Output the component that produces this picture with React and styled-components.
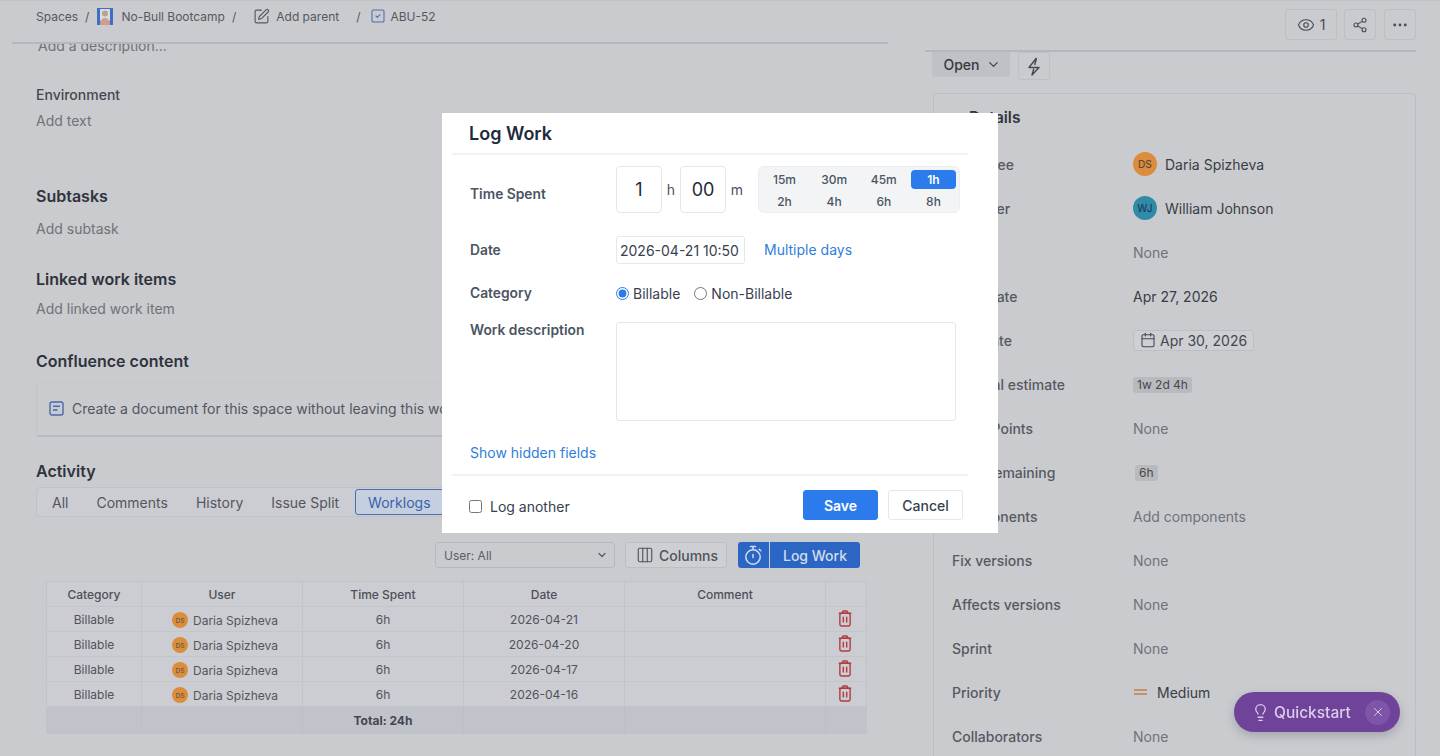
import React from 'react';
import styled, { createGlobalStyle } from 'styled-components';
import {
  Calendar,
  ChevronDown,
  Columns3,
  Eye,
  Lightbulb,
  MoreHorizontal,
  Share2,
  SquareCheck,
  SquarePen,
  X,
} from 'lucide-react';

const GlobalStyle = createGlobalStyle`
  * {
    box-sizing: border-box;
  }

  html,
  body {
    margin: 0;
    height: 100%;
    overflow: hidden;
    background: #c9cbcf;
    font-family: Inter, 'Liberation Sans', sans-serif;
  }
`;

const Page = styled.div`
  display: grid;
  grid-template-columns: 876px 491px;
  column-gap: 37px;
  height: 756px;
  padding-left: 12px;
  overflow: hidden;
  border-top: 1px solid #c0c2c6;
  background: #c9cbcf;
`;

/* ---------- left column ---------- */

const LeftColumn = styled.div`
  display: flex;
  flex-direction: column;
  min-height: 0;
`;

const Breadcrumbs = styled.nav`
  display: flex;
  align-items: center;
  flex: 0 0 43px;
  padding: 0 0 11px 24px;
  border-bottom: 2px solid #b5b7bc;
  font-size: 12px;
  color: #55585f;
`;

const Crumb = styled.span`
  display: inline-flex;
  align-items: center;
  gap: ${(p) => p.$gap || 0}px;
  margin-left: ${(p) => p.$left || 0}px;
`;

const Scroller = styled.div`
  flex: 1;
  min-height: 0;
  overflow: hidden;
  padding-left: 24px;
`;

const Placeholder = styled.div`
  margin-top: ${(p) => p.$top || 0}px;
  margin-left: ${(p) => p.$left || 0}px;
  font-size: 14px;
  line-height: 20px;
  color: #6f7278;
`;

const FieldLabel = styled.div`
  margin-top: ${(p) => p.$top}px;
  font-size: 14px;
  font-weight: 500;
  line-height: 20px;
  color: #44474f;
`;

const SectionTitle = styled.h3`
  margin: ${(p) => p.$top}px 0 0;
  font-size: 16px;
  font-weight: 600;
  line-height: 24px;
  color: #2f333c;
`;

const ConfluenceCard = styled.div`
  display: flex;
  align-items: center;
  gap: 8px;
  width: 830px;
  height: 55px;
  margin-top: 9px;
  padding: 0 12px 2px;
  border: 1px solid #c2c4c8;
  border-top-color: #c6c8cc;
  border-bottom: 2px solid #b8babf;
  border-radius: 4px;
  font-size: 14px;
  color: #53565d;
`;

const Tabs = styled.div`
  display: flex;
  align-items: center;
  gap: 2px;
  width: 830px;
  height: 30px;
  margin-top: 4px;
  padding: 0 2px;
  border: 1px solid #bfc1c6;
  border-radius: 4px;
  background: #cccdd2;
`;

const Tab = styled.div`
  display: flex;
  align-items: center;
  height: 26px;
  margin-left: ${(p) => (p.$active ? '1px' : '0')};
  padding: 0 12px;
  border: 1px solid ${(p) => (p.$active ? '#4a70b4' : 'transparent')};
  border-radius: 3px;
  background: ${(p) => (p.$active ? '#c5cfe0' : 'transparent')};
  font-size: 14px;
  color: ${(p) => (p.$active ? '#3a62a9' : '#53565d')};
`;

const Toolbar = styled.div`
  display: flex;
  justify-content: flex-end;
  gap: 10px;
  width: 824px;
  height: 26px;
  margin-top: 25px;
`;

const UserSelect = styled.div`
  display: flex;
  align-items: center;
  justify-content: space-between;
  width: 180px;
  padding: 0 6px 0 8px;
  border: 1px solid #b7b9be;
  border-radius: 3px;
  font-size: 12px;
  color: #5a5d64;
`;

const ColumnsButton = styled.div`
  display: flex;
  align-items: center;
  gap: 5px;
  width: 102px;
  padding-left: 10px;
  border: 1px solid #bcbec3;
  border-radius: 3px;
  background: #cdcfd3;
  font-size: 14px;
  font-weight: 500;
  color: #50535a;
`;

const LogWorkButton = styled.div`
  display: flex;
  margin-left: 1px;
  width: 122px;
  border-radius: 3px;
  background: #2c66c4;
  color: #d3dcee;
  font-size: 14px;
  font-weight: 500;
`;

const LogWorkIcon = styled.span`
  display: flex;
  align-items: center;
  justify-content: center;
  flex: 0 0 32px;
  border-right: 1px solid #c4d0e8;
`;

const LogWorkText = styled.span`
  flex: 1;
  align-self: center;
  text-align: center;
`;

const WorklogTable = styled.table`
  width: 820px;
  margin: 13px 0 0 10px;
  border: 1px solid #c1c3c7;
  border-collapse: collapse;
  table-layout: fixed;
  font-size: 12px;
  color: #50535a;
  text-align: center;
  background: #cccdd2;

  th {
    height: 25px;
    padding: 0;
    font-weight: 500;
    border-right: 1px solid #c1c3c7;
    border-bottom: 1px solid #c3c5c9;
    color: #4d5058;
  }

  td {
    height: 25px;
    padding: 1px 0 0;
    border-right: 1px solid #c1c3c7;
    border-bottom: 1px solid #c3c5c9;
  }

  th:last-child,
  td:last-child {
    padding-right: 3px;
    border-right: none;
  }
`;

const TotalRow = styled.tr`
  td {
    height: 27px;
    background: #c0c3c9;
    border-right-color: #bcbfc5;
    border-bottom: none;
    font-weight: 700;
    color: #44474f;
  }
`;

const UserCell = styled.span`
  display: inline-flex;
  align-items: center;
  gap: 5px;
  padding-left: 6px;
  color: #53565d;
`;

const Avatar = styled.span`
  display: inline-flex;
  align-items: center;
  justify-content: center;
  flex: none;
  width: ${(p) => p.$size}px;
  height: ${(p) => p.$size}px;
  border-radius: 50%;
  background: ${(p) => p.$color};
  color: ${(p) => p.$ink};
  font-size: ${(p) => p.$size * 0.42}px;
  font-weight: 500;
`;

/* ---------- right column ---------- */

const RightColumn = styled.div`
  display: flex;
  flex-direction: column;
  min-height: 0;
`;

const ActionBar = styled.div`
  display: flex;
  justify-content: flex-end;
  gap: 7px;
  flex: 0 0 51px;
  padding-top: 8px;
  border-bottom: 2px solid #b5b7bc;
`;

const IconButton = styled.div`
  display: flex;
  align-items: center;
  justify-content: center;
  gap: 5px;
  width: ${(p) => p.$width || 32}px;
  height: ${(p) => p.$height || 31}px;
  margin-left: ${(p) => p.$left || 0}px;
  border: 1px solid #bdbfc4;
  border-radius: 3px;
  font-size: 14px;
  color: #4a4d55;
`;

const StatusRow = styled.div`
  display: flex;
  align-items: flex-start;
  gap: 8px;
  height: 28px;
  padding-left: 7px;
`;

const StatusButton = styled.div`
  display: flex;
  align-items: center;
  justify-content: center;
  gap: 6px;
  width: 78px;
  height: 25px;
  padding-left: 2px;
  background: #bfc1c6;
  border-radius: 0 0 3px 3px;
  font-size: 14px;
  font-weight: 500;
  color: #35383f;
`;

const DetailsCard = styled.section`
  flex: 1;
  margin: 13px 0 0 8px;
  padding: 12px 0 0 18px;
  border: 1px solid #bcbec3;
  border-bottom: none;
  border-radius: 4px 4px 0 0;
`;

const DetailsTitle = styled.h3`
  margin: 0 0 12px 17px;
  font-size: 15.5px;
  font-weight: 600;
  line-height: 24px;
  color: #33363e;
`;

const DetailRow = styled.div`
  display: grid;
  grid-template-columns: 181px 1fr;
  align-items: center;
  height: 44px;
  font-size: 14px;
`;

const DetailLabel = styled.span`
  font-weight: 500;
  color: #56595f;
`;

const DetailValue = styled.span`
  display: flex;
  align-items: center;
  gap: ${(p) => p.$gap || 0}px;
  color: ${(p) => (p.$muted ? '#6f7278' : '#3a3d44')};
`;

const DateChip = styled.span`
  display: inline-flex;
  align-items: center;
  gap: 4px;
  height: 21px;
  padding: 0 6px;
  border: 1px solid #bdbfc4;
  border-radius: 3px;
  background: #cdcfd3;
  color: #44474f;
`;

const TimeTag = styled.span`
  display: inline-block;
  margin: 1px 0 0 ${(p) => p.$left || 0}px;
  padding: 0 4px;
  border-radius: 3px;
  background: #b8babe;
  font-size: 12px;
  line-height: 16px;
  color: #44474f;
`;

const PriorityMark = styled.span`
  width: 13px;
  height: 6px;
  margin: 0 10px 0 1px;
  border-top: 2px solid #c2916c;
  border-bottom: 2px solid #c2916c;
`;

const Quickstart = styled.div`
  position: fixed;
  right: 40px;
  bottom: 24px;
  display: flex;
  align-items: center;
  width: 166px;
  height: 40px;
  padding-left: 17px;
  border-radius: 20px;
  background: #6f4399;
  box-shadow: 0 4px 10px rgba(60, 60, 70, 0.25);
  color: #dccdea;
  font-size: 15.5px;
  font-weight: 500;
`;

const QuickstartText = styled.span`
  margin-left: 4px;
`;

const QuickstartClose = styled.span`
  position: absolute;
  right: 10px;
  display: flex;
  align-items: center;
  justify-content: center;
  width: 25px;
  height: 25px;
  border-radius: 50%;
  background: #7e55a9;
`;

/* ---------- modal ---------- */

const ModalLayer = styled.div`
  position: fixed;
  inset: 0;
  display: flex;
  justify-content: center;
  align-items: flex-start;
  padding-top: 113px;
`;

const Modal = styled.div`
  width: 556px;
  height: 420px;
  background: #fff;
`;

const ModalHeader = styled.header`
  display: flex;
  align-items: center;
  height: 42px;
  margin: 0 30px 0 10px;
  padding-left: 17px;
  border-bottom: 2px solid #f1f2f4;
`;

const ModalTitle = styled.h2`
  margin: 0;
  font-size: 18px;
  font-weight: 600;
  color: #1f2a3d;
`;

const FormRow = styled.div`
  display: grid;
  grid-template-columns: 146px 1fr;
  align-items: ${(p) => p.$align || 'center'};
  margin-top: ${(p) => p.$top}px;
  padding-left: 28px;
`;

const FormLabel = styled.label`
  margin-top: ${(p) => p.$shift || 0}px;
  font-size: 13.8px;
  font-weight: 600;
  line-height: 20px;
  color: #4b5563;
`;

const TimeControls = styled.div`
  display: flex;
  align-items: stretch;
  height: 47px;
`;

const TimeInput = styled.input`
  width: 46px;
  padding: 0;
  border: 1px solid #e5e7eb;
  border-radius: 4px;
  outline: none;
  font-family: inherit;
  font-size: 18px;
  text-align: center;
  color: #1f2937;
`;

const TimeUnit = styled.span`
  display: flex;
  align-items: center;
  justify-content: center;
  width: ${(p) => p.$width}px;
  margin-right: ${(p) => p.$right || 0}px;
  font-size: 14px;
  color: #4b5563;
`;

const QuickPicker = styled.div`
  display: grid;
  grid-template-columns: repeat(4, 45px);
  grid-auto-rows: 19px;
  gap: 3px 4.67px;
  width: 202px;
  padding: 3px;
  border: 1px solid #eceef1;
  border-radius: 6px;
  background: #f3f4f6;
`;

const QuickOption = styled.span`
  display: flex;
  align-items: center;
  justify-content: center;
  border-radius: 4px;
  background: ${(p) => (p.$active ? '#2b7bec' : 'transparent')};
  color: ${(p) => (p.$active ? '#fff' : '#4b5563')};
  font-size: 12px;
  font-weight: ${(p) => (p.$active ? 600 : 500)};
`;

const DateLine = styled.div`
  display: flex;
  align-items: center;
  gap: 19px;
`;

const DateInput = styled.input`
  width: 129px;
  height: 28px;
  padding: 0 3px;
  border: 1px solid #e5e7eb;
  border-radius: 3px;
  outline: none;
  font-family: inherit;
  font-size: 14px;
  color: #374151;
`;

const TextLink = styled.span`
  font-size: 14px;
  line-height: 20px;
  color: #2f80d8;
`;

const ShowHidden = styled.div`
  margin: 21px 0 0 28px;
  line-height: 20px;
`;

const RadioGroup = styled.div`
  display: flex;
  align-items: center;
  height: 20px;
  gap: 14px;
`;

const RadioOption = styled.label`
  display: flex;
  align-items: center;
  gap: 4px;
  font-size: 14px;
  color: #374151;
`;

const Radio = styled.input`
  width: 13px;
  height: 13px;
  margin: 0;
  accent-color: #2b7bec;
`;

const Description = styled.textarea`
  display: block;
  width: 340px;
  height: 99px;
  border: 1px solid #e5e7eb;
  border-radius: 3px;
  outline: none;
  resize: none;
`;

const ModalFooter = styled.footer`
  display: flex;
  align-items: center;
  height: 58px;
  margin: 11px 30px 0 10px;
  padding: 2px 5px 0 17px;
  border-top: 2px solid #f1f2f4;
`;

const LogAnother = styled.label`
  display: flex;
  align-items: center;
  gap: 8px;
  flex: 1;
  padding-top: 2px;
  font-size: 14px;
  color: #374151;
`;

const Checkbox = styled.input`
  width: 13px;
  height: 13px;
  margin: 0;
`;

const FooterButton = styled.button`
  width: 75px;
  height: 30px;
  margin-left: 10px;
  border: 1px solid ${(p) => (p.$primary ? '#2b7bec' : '#e5e7eb')};
  border-radius: 3px;
  background: ${(p) => (p.$primary ? '#2b7bec' : '#fff')};
  color: ${(p) => (p.$primary ? '#fff' : '#374151')};
  font-family: inherit;
  font-size: 14px;
  font-weight: ${(p) => (p.$primary ? 600 : 500)};
`;

/* ---------- drawn icons ---------- */

function SpaceAvatar() {
  return (
    <svg width="16" height="17" viewBox="0 0 16 17">
      <rect width="16" height="17" fill="#3f6fc2" />
      <rect x="3" y="1" width="10" height="12" fill="#d9dce2" />
      <circle cx="8" cy="5.5" r="3" fill="#b9a294" />
      <path d="M3 17c0-5 2-7 5-7s5 2 5 7z" fill="#cf9f8c" />
    </svg>
  );
}

function DocIcon() {
  return (
    <svg width="15" height="15" viewBox="0 0 15 15" fill="none" stroke="#4a68ad" strokeWidth="1.4">
      <rect x="1" y="1" width="13" height="13" rx="2" />
      <path d="M4 5.2h7M4 9h4.5" />
    </svg>
  );
}

function TimerIcon() {
  return (
    <svg width="19" height="21" viewBox="0 0 19 21" fill="none" stroke="#d3dcee" strokeWidth="1.5" strokeLinecap="round">
      <circle cx="9" cy="12" r="7.2" />
      <path d="M6.5 1.5h5M9 1.5v3M15.2 4.2l1.6 1.6M9 9.5v3" />
    </svg>
  );
}

function BoltIcon() {
  return (
    <svg width="16" height="19" viewBox="0 0 16 19" fill="none" stroke="#45484f" strokeWidth="1.4" strokeLinejoin="round">
      <path d="M10.5 1 3 10.5h10L6 18l1.8-6.2M10.5 1 8.7 8" />
    </svg>
  );
}

function TrashIcon() {
  return (
    <svg width="14" height="17" viewBox="0 0 15 18" fill="none" stroke="#b23c3f" strokeWidth="1.5" strokeLinejoin="round">
      <path d="M4.8 3V2a1 1 0 0 1 1-1h3.4a1 1 0 0 1 1 1v1M.8 3.3h13.4" />
      <rect x="2" y="3.3" width="11" height="13.7" rx="2" />
      <path d="M5.7 7v6.4M9.3 7v6.4" />
    </svg>
  );
}

/* ---------- data ---------- */

const tabs = ['All', 'Comments', 'History', 'Issue Split', 'Worklogs'];
const worklogDates = ['2026-04-21', '2026-04-20', '2026-04-17', '2026-04-16'];
const quickTimes = ['15m', '30m', '45m', '1h', '2h', '4h', '6h', '8h'];
const columnWidths = [95, 161, 161, 161, 201, 41];

const details = [
  {
    label: 'Assignee',
    gap: 8,
    value: (
      <>
        <Avatar $size={24} $color="#dc8d3c" $ink="#5a4a3a">DS</Avatar>
        Daria Spizheva
      </>
    ),
  },
  {
    label: 'Reporter',
    gap: 8,
    value: (
      <>
        <Avatar $size={24} $color="#2f8ba6" $ink="#1d3f63">WJ</Avatar>
        William Johnson
      </>
    ),
  },
  { label: 'Labels', muted: true, value: 'None' },
  { label: 'Start date', value: 'Apr 27, 2026' },
  {
    label: 'Due date',
    value: (
      <DateChip>
        <Calendar size={16} strokeWidth={1.6} />
        Apr 30, 2026
      </DateChip>
    ),
  },
  { label: 'Original estimate', value: <TimeTag>1w 2d 4h</TimeTag> },
  { label: 'Story Points', muted: true, value: 'None' },
  { label: 'Time remaining', value: <TimeTag $left={2}>6h</TimeTag> },
  { label: 'Components', muted: true, value: 'Add components' },
  { label: 'Fix versions', muted: true, value: 'None' },
  { label: 'Affects versions', muted: true, value: 'None' },
  { label: 'Sprint', muted: true, value: 'None' },
  {
    label: 'Priority',
    value: (
      <>
        <PriorityMark />
        Medium
      </>
    ),
  },
  { label: 'Collaborators', muted: true, value: 'None' },
];

export default function App() {
  return (
    <>
      <GlobalStyle />
      <Page>
        <LeftColumn>
          <Breadcrumbs>
            <Crumb>Spaces</Crumb>
            <Crumb $left={7}>/</Crumb>
            <Crumb $left={8} $gap={8}>
              <SpaceAvatar />
              No-Bull Bootcamp
            </Crumb>
            <Crumb $left={7}>/</Crumb>
            <Crumb $left={17} $gap={6}>
              <SquarePen size={17} strokeWidth={1.6} />
              Add parent
            </Crumb>
            <Crumb $left={17}>/</Crumb>
            <Crumb $left={10} $gap={4}>
              <SquareCheck size={16} strokeWidth={1.6} color="#4a6fb5" />
              ABU-52
            </Crumb>
          </Breadcrumbs>

          <Scroller>
            <Placeholder $top={-8} $left={2}>Add a description...</Placeholder>
            <FieldLabel $top={29}>Environment</FieldLabel>
            <Placeholder $top={6}>Add text</Placeholder>

            <SectionTitle $top={53}>Subtasks</SectionTitle>
            <Placeholder $top={11}>Add subtask</Placeholder>

            <SectionTitle $top={28}>Linked work items</SectionTitle>
            <Placeholder $top={8}>Add linked work item</Placeholder>

            <SectionTitle $top={30}>Confluence content</SectionTitle>
            <ConfluenceCard>
              <DocIcon />
              Create a document for this space without leaving this work item
            </ConfluenceCard>

            <SectionTitle $top={22}>Activity</SectionTitle>
            <Tabs>
              {tabs.map((tab) => (
                <Tab key={tab} $active={tab === 'Worklogs'}>{tab}</Tab>
              ))}
            </Tabs>

            <Toolbar>
              <UserSelect>
                User: All
                <ChevronDown size={12} strokeWidth={2.6} />
              </UserSelect>
              <ColumnsButton>
                <Columns3 size={18} strokeWidth={1.5} />
                Columns
              </ColumnsButton>
              <LogWorkButton>
                <LogWorkIcon>
                  <TimerIcon />
                </LogWorkIcon>
                <LogWorkText>Log Work</LogWorkText>
              </LogWorkButton>
            </Toolbar>

            <WorklogTable>
              <colgroup>
                {columnWidths.map((width, i) => (
                  <col key={i} width={width} />
                ))}
              </colgroup>
              <thead>
                <tr>
                  <th>Category</th>
                  <th>User</th>
                  <th>Time Spent</th>
                  <th>Date</th>
                  <th>Comment</th>
                  <th />
                </tr>
              </thead>
              <tbody>
                {worklogDates.map((date) => (
                  <tr key={date}>
                    <td>Billable</td>
                    <td>
                      <UserCell>
                        <Avatar $size={16} $color="#dc8d3c" $ink="#6a5a48">DS</Avatar>
                        Daria Spizheva
                      </UserCell>
                    </td>
                    <td>6h</td>
                    <td>{date}</td>
                    <td />
                    <td>
                      <TrashIcon />
                    </td>
                  </tr>
                ))}
                <TotalRow>
                  <td />
                  <td />
                  <td>Total: 24h</td>
                  <td />
                  <td />
                  <td />
                </TotalRow>
              </tbody>
            </WorklogTable>
          </Scroller>
        </LeftColumn>

        <RightColumn>
          <ActionBar>
            <IconButton $width={52}>
              <Eye size={18} strokeWidth={1.5} />1
            </IconButton>
            <IconButton>
              <Share2 size={16} strokeWidth={1.6} />
            </IconButton>
            <IconButton $left={1}>
              <MoreHorizontal size={18} strokeWidth={1.8} />
            </IconButton>
          </ActionBar>

          <StatusRow>
            <StatusButton>
              Open
              <ChevronDown size={15} strokeWidth={1.8} />
            </StatusButton>
            <IconButton $height={28}>
              <BoltIcon />
            </IconButton>
          </StatusRow>

          <DetailsCard>
            <DetailsTitle>Details</DetailsTitle>
            {details.map((row) => (
              <DetailRow key={row.label}>
                <DetailLabel>{row.label}</DetailLabel>
                <DetailValue $muted={row.muted} $gap={row.gap}>{row.value}</DetailValue>
              </DetailRow>
            ))}
          </DetailsCard>
        </RightColumn>

        <Quickstart>
          <Lightbulb size={19} strokeWidth={1.6} />
          <QuickstartText>Quickstart</QuickstartText>
          <QuickstartClose>
            <X size={14} strokeWidth={1.6} />
          </QuickstartClose>
        </Quickstart>
      </Page>

      <ModalLayer>
        <Modal>
          <ModalHeader>
            <ModalTitle>Log Work</ModalTitle>
          </ModalHeader>

          <FormRow $top={11}>
            <FormLabel $shift={8}>Time Spent</FormLabel>
            <TimeControls>
              <TimeInput defaultValue="1" />
              <TimeUnit $width={18}>h</TimeUnit>
              <TimeInput defaultValue="00" />
              <TimeUnit $width={22} $right={10}>m</TimeUnit>
              <QuickPicker>
                {quickTimes.map((time) => (
                  <QuickOption key={time} $active={time === '1h'}>{time}</QuickOption>
                ))}
              </QuickPicker>
            </TimeControls>
          </FormRow>

          <FormRow $top={23}>
            <FormLabel>Date</FormLabel>
            <DateLine>
              <DateInput defaultValue="2026-04-21 10:50" />
              <TextLink>Multiple days</TextLink>
            </DateLine>
          </FormRow>

          <FormRow $top={19}>
            <FormLabel>Category</FormLabel>
            <RadioGroup>
              <RadioOption>
                <Radio type="radio" name="category" defaultChecked />
                Billable
              </RadioOption>
              <RadioOption>
                <Radio type="radio" name="category" />
                Non-Billable
              </RadioOption>
            </RadioGroup>
          </FormRow>

          <FormRow $top={19} $align="start">
            <FormLabel $shift={-2}>Work description</FormLabel>
            <Description />
          </FormRow>

          <ShowHidden>
            <TextLink>Show hidden fields</TextLink>
          </ShowHidden>

          <ModalFooter>
            <LogAnother>
              <Checkbox type="checkbox" />
              Log another
            </LogAnother>
            <FooterButton $primary>Save</FooterButton>
            <FooterButton>Cancel</FooterButton>
          </ModalFooter>
        </Modal>
      </ModalLayer>
    </>
  );
}
